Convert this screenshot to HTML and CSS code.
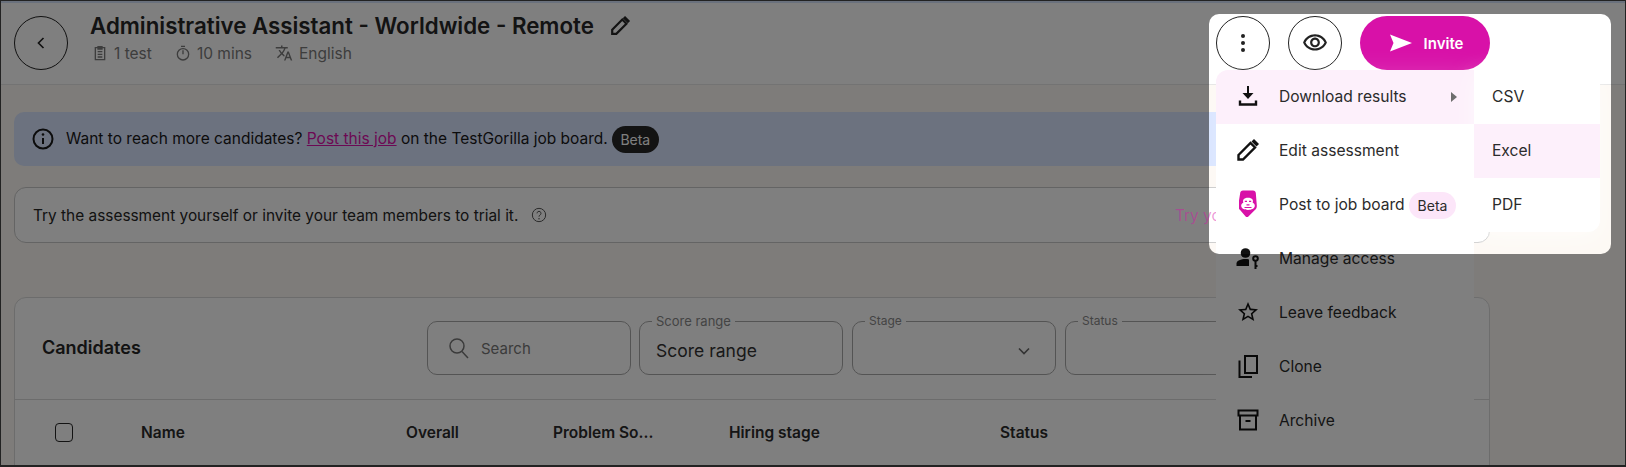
FILE: index.html
```html
<!DOCTYPE html>
<html lang="en">
<head>
<meta charset="utf-8">
<title>Administrative Assistant - Worldwide - Remote</title>
<link rel="stylesheet" href="styles.css">
</head>
<body>
<div class="frame">
  <div class="topband"></div>
  <header class="header">
    <button class="circle" aria-label="Back">
      <svg class="ico-20" viewBox="0 0 24 24"><path class="st2" d="M15 6l-6 6 6 6"/></svg>
    </button>
    <div class="heading">
      <h1 class="title">Administrative Assistant - Worldwide - Remote
        <svg class="ico-22" viewBox="0 0 24 24"><path class="st24" d="M3.500 16 14.500 5l4.500 4.500-11 11H3.500z"/><path d="M15 3.500 17.500 1 23 6.500 20.500 9z"/></svg>
      </h1>
      <div class="meta">
        <span class="meta-item">
          <svg class="ico-16" viewBox="0 0 24 24"><path class="st2" d="M5 4h14v18H5zM9 2.500h6V6H9zM8.500 10h7M8.500 14h7M8.500 18h7"/></svg>1 test</span>
        <span class="meta-item">
          <svg class="ico-16" viewBox="0 0 24 24"><path class="st2" d="M9 2h6M12 8v6"/><circle class="st2" cx="12" cy="14" r="8.500"/></svg>10 mins</span>
        <span class="meta-item">
          <svg class="ico-18" viewBox="0 0 24 24"><path d="M12.870 15.070l-2.540-2.510.030-.030c1.740-1.940 2.980-4.170 3.710-6.530H17V4h-7V2H8v2H1v1.990h11.170C11.500 7.920 10.440 9.750 9 11.350 8.070 10.320 7.300 9.190 6.690 8h-2c.730 1.630 1.730 3.170 2.980 4.560l-5.090 5.020L4 19l5-5 3.110 3.110.760-2.040zM18.500 10h-2L12 22h2l1.120-3h4.750L21 22h2l-4.500-12zm-2.620 7l1.620-4.330L19.120 17h-3.240z"/></svg>English</span>
      </div>
    </div>
    <div class="actions">
      <button class="circle" aria-label="More">
        <svg class="ico-24" viewBox="0 0 24 24"><circle cx="12" cy="5" r="2"/><circle cx="12" cy="12" r="2"/><circle cx="12" cy="19" r="2"/></svg>
      </button>
      <button class="circle" aria-label="Preview">
        <svg class="ico-26" viewBox="0 0 24 24"><path d="M12 6c3.790 0 7.170 2.130 8.820 5.500C19.170 14.870 15.790 17 12 17s-7.170-2.130-8.820-5.500C4.830 8.130 8.210 6 12 6m0-2C7 4 2.730 7.110 1 11.500 2.730 15.890 7 19 12 19s9.270-3.110 11-7.500C21.270 7.110 17 4 12 4zm0 5c1.380 0 2.500 1.120 2.500 2.500S13.380 14 12 14s-2.500-1.120-2.500-2.500S10.620 9 12 9m0-2c-2.480 0-4.500 2.020-4.500 4.500S9.520 16 12 16s4.500-2.020 4.500-4.500S14.480 7 12 7z"/></svg>
      </button>
      <button class="invite">
        <svg class="ico-24" viewBox="0 0 24 24"><path d="M1 20.500 23 12 1 3.500 4.500 12z"/></svg>Invite
      </button>
    </div>
  </header>

  <main class="main">
    <div class="banner">
      <svg class="ico-24" viewBox="0 0 24 24"><circle class="st2" cx="12" cy="12" r="9.500"/><path class="st2" d="M12 11v6"/><circle cx="12" cy="7.500" r="1.300"/></svg>
      <span class="banner-text">Want to reach more candidates? <a class="link" href="#">Post this job</a> on the TestGorilla job board.</span>
      <span class="beta-dark">Beta</span>
    </div>

    <div class="trial">
      <span>Try the assessment yourself or invite your team members to trial it.</span>
      <svg class="ico-16 help" viewBox="0 0 24 24"><circle class="st15" cx="12" cy="12" r="10"/><path class="st15" d="M9 9.500a3 3 0 1 1 4.500 2.600c-1 .6-1.500 1.100-1.500 2.400"/><circle cx="12" cy="17.500" r="1.100"/></svg>
      <a class="trial-link" href="#">Try yourself</a>
    </div>

    <section class="candidates">
      <div class="cand-head">
        <h2 class="cand-title">Candidates</h2>
        <div class="filters">
          <label class="search">
            <svg class="ico-24" viewBox="0 0 24 24"><circle class="st15" cx="10" cy="10" r="7"/><path class="st15" d="M15 15.500l6 6.500"/></svg>
            <span>Search</span>
          </label>
          <fieldset class="field field-score"><legend>Score range</legend><span>Score range</span></fieldset>
          <fieldset class="field field-next"><legend>Stage</legend>
            <svg class="ico-20 chev" viewBox="0 0 24 24"><path class="st2" d="M6 9l6 6 6-6"/></svg></fieldset>
          <fieldset class="field field-next"><legend>Status</legend></fieldset>
        </div>
      </div>
      <div class="thead">
        <span class="checkbox"></span>
        <span class="th th-name">Name</span>
        <span class="th th-overall">Overall</span>
        <span class="th th-problem">Problem So...</span>
        <span class="th th-stage">Hiring stage</span>
        <span class="th">Status</span>
      </div>
    </section>
  </main>

  <nav class="menu">
    <div class="row row-active">
      <svg class="ico-24" viewBox="0 0 24 24"><path class="st2" d="M12 2v11"/><path d="M6.500 9h11L12 15z"/><path class="st24" d="M4 16.500v4h16v-4"/></svg>
      <span>Download results</span>
      <span class="caret"></span>
      <div class="submenu">
        <div class="subrow">CSV</div>
        <div class="subrow subrow-active">Excel</div>
        <div class="subrow">PDF</div>
      </div>
    </div>
    <div class="row">
      <svg class="ico-24" viewBox="0 0 24 24"><path class="st24" d="M2.500 17 14.500 5l4.500 4.500-12 12H2.500z"/><path d="M15.500 3.500 18 1l5 5-2.500 2.500z"/></svg>
      <span>Edit assessment</span>
    </div>
    <div class="row">
      <svg class="logo" viewBox="0 0 18 28">
        <path class="gor" d="M4 .5h10c1.700 0 2.600.9 2.800 2.500l1 12.500c.1 1.900-.5 3.300-1.900 4.600l-6.500 6.400c-.9.700-1.900.7-2.800 0L1.100 20.100C-.3 18.800-.9 17.400-.8 15.500L1.200 3C1.400 1.400 2.300.5 4 .5z"/>
        <path class="gor-w" d="M4.500 9.500C6 7 12 7 13.500 9.500c.6 1 .6 2.200.1 3 1.400.8 2.400 2 2.200 3.500-.4 2.600-3.300 3.900-6.800 3.900s-6.400-1.300-6.800-3.900c-.2-1.500.8-2.700 2.200-3.500-.5-.8-.5-2 .1-3z"/>
        <path class="gor" d="M5.800 10.700h2.200v1.200H5.800zM10 10.700h2.200v1.200H10zM7.500 14.300h3v1.300h-3zM5.500 17h7v1h-7z"/>
      </svg>
      <span>Post to job board</span>
      <span class="beta-pink">Beta</span>
    </div>
    <div class="row">
      <svg class="ico-24" viewBox="0 0 24 24"><circle cx="9.500" cy="7" r="4.800"/><path d="M0.500 20v-2.500c0-3 4.500-4.500 9-4.500 1.300 0 2.500.1 3.500.4V20z"/><circle class="st2" cx="19.500" cy="12.500" r="2.300"/><path class="st2" d="M19.500 15v8M19.500 20h2"/></svg>
      <span>Manage access</span>
    </div>
    <div class="row">
      <svg class="ico-26" viewBox="0 0 24 24"><path d="M22 9.240l-7.190-.62L12 2 9.190 8.630 2 9.240l5.460 4.730L5.820 21 12 17.270 18.180 21l-1.630-7.030L22 9.240zM12 15.400l-3.760 2.270 1-4.280-3.320-2.880 4.380-.38L12 6.100l1.710 4.040 4.380.38-3.320 2.880 1 4.280L12 15.400z"/></svg>
      <span>Leave feedback</span>
    </div>
    <div class="row">
      <svg class="ico-24" viewBox="0 0 24 24"><path class="st2" d="M9 2h12v17H9zM3.500 6.500V23H16"/></svg>
      <span>Clone</span>
    </div>
    <div class="row">
      <svg class="ico-26" viewBox="0 0 24 24"><path class="st2" d="M2.500 2.500h19v5h-19zM4 7.500v14h16v-14M9.500 13h5"/></svg>
      <span>Archive</span>
    </div>
  </nav>

  <div class="spotlight"></div>
</div>
</body>
</html>
```
FILE: styles.css
```css
* { box-sizing: border-box; }
html, body { margin: 0; padding: 0; }
body { font-family: Inter, "Liberation Sans", sans-serif; color: #262626; background: #fdf9f4; }

svg { fill: currentColor; flex: none; display: block; }
.st2 { fill: none; stroke: currentColor; stroke-width: 2; }
.st24 { fill: none; stroke: currentColor; stroke-width: 2.400; }
.st15 { fill: none; stroke: currentColor; stroke-width: 1.500; }
.ico-16 { width: 16px; height: 16px; }
.ico-18 { width: 18px; height: 18px; }
.ico-20 { width: 20px; height: 20px; }
.ico-22 { width: 22px; height: 22px; }
.ico-24 { width: 24px; height: 24px; }
.ico-26 { width: 26px; height: 26px; }

.frame {
  position: relative;
  width: 1626px;
  height: 467px;
  overflow: hidden;
  border: 1px solid #222;
  border-bottom-width: 2px;
  background: #fdf9f4;
}
.topband { height: 2px; background: #d5e3fb; }

/* header */
.header {
  display: flex;
  align-items: flex-start;
  height: 82px;
  padding: 13px 135px 0 13px;
  background: #fff;
  border-bottom: 1px solid #e6e6e6;
}
.circle {
  width: 54px;
  height: 54px;
  border-radius: 50%;
  border: 1px solid #222;
  background: transparent;
  color: #222;
  padding: 0;
  display: flex;
  align-items: center;
  justify-content: center;
}
.heading { margin-left: 22px; margin-top: -4px; }
.title {
  margin: 0;
  display: flex;
  align-items: center;
  gap: 15px;
  height: 28px;
  font-size: 22.300px;
  line-height: 28px;
  font-weight: 600;
  color: #262626;
  white-space: nowrap;
}
.meta {
  display: flex;
  gap: 23px;
  margin-top: 2px;
  padding-left: 2px;
  height: 22px;
  align-items: center;
  font-size: 15.500px;
  color: #7a7a7a;
}
.meta-item { display: flex; align-items: center; gap: 6px; }
.actions { margin-left: auto; display: flex; gap: 18px; }
.invite {
  width: 130px;
  height: 54px;
  border: 0;
  border-radius: 27px;
  background: #d811a8;
  color: #fff;
  font: 600 15px Inter, "Liberation Sans", sans-serif;
  display: flex;
  align-items: center;
  justify-content: center;
  gap: 11px;
  padding: 0 0 0 2px;
}

/* main column */
.main { padding: 27px 135px 0 13px; }
.banner {
  display: flex;
  align-items: center;
  height: 54px;
  padding-left: 17px;
  border-radius: 10px;
  background: #d8e4ff;
  color: #181818;
  font-size: 15.500px;
}
.banner-text { margin-left: 11px; margin-bottom: 2px; white-space: nowrap; }
.link { color: #d811a8; text-decoration: underline; }
.beta-dark {
  margin-left: 4px;
  height: 27px;
  width: 47px;
  border-radius: 14px;
  background: #262626;
  color: #fff;
  font-size: 14px;
  display: flex;
  align-items: center;
  justify-content: center;
}
.trial {
  display: flex;
  align-items: center;
  height: 56px;
  margin-top: 21px;
  padding-left: 18px;
  border: 1px solid #c9c9c9;
  border-radius: 12px;
  background: #fff;
  font-size: 15.400px;
  color: #262626;
}
.help { margin-left: 13px; color: #555; }
.trial-link {
  position: relative;
  z-index: 30;
  display: block;
  width: 41px;
  margin-left: auto;
  margin-right: 273px;
  overflow: hidden;
  white-space: nowrap;
  color: rgba(216, 17, 168, .45);
  text-decoration: none;
}

/* candidates */
.candidates {
  height: 300px;
  margin-top: 54px;
  border: 1px solid #d9d9d9;
  border-radius: 12px;
  background: #fff;
}
.cand-head {
  display: flex;
  align-items: center;
  height: 102px;
  padding: 0 0 2px 27px;
  border-bottom: 1px solid #d9d9d9;
}
.cand-title { margin: 0; width: 385px; font-size: 18px; font-weight: 600; color: #262626; }
.filters { display: flex; gap: 8px; align-items: flex-start; margin-top: 1px; }
.search {
  display: flex;
  align-items: center;
  gap: 10px;
  width: 204px;
  height: 54px;
  padding-left: 19px;
  border: 1px solid #a8a8a8;
  border-radius: 10px;
  font-size: 15px;
  color: #777;
}
.field {
  width: 204px;
  height: 60px;
  margin: -6px 0 0;
  padding: 0 16px;
  border: 1px solid #a8a8a8;
  border-radius: 10px;
  font-size: 17.500px;
  color: #333;
  display: flex;
  align-items: center;
}
.field-next { margin-left: 1px; }
.field legend { margin-left: -4px; padding: 0 4px; font-size: 12px; line-height: 12px; color: #888; }
.field-score legend { font-size: 13px; }
.chev { margin-left: auto; color: #666; margin-right: 5px; }

.thead {
  display: flex;
  align-items: center;
  height: 64px;
  padding-left: 40px;
  font-size: 15.500px;
  font-weight: 600;
  color: #2a2a2a;
}
.checkbox {
  width: 18px;
  height: 19px;
  border: 1px solid #262626;
  border-radius: 4px;
  margin-right: 68px;
  background: #fff;
}
.th { white-space: nowrap; }
.th-name { width: 265px; }
.th-overall { width: 147px; }
.th-problem { width: 176px; }
.th-stage { width: 271px; }

/* dropdown */
.menu {
  position: absolute;
  left: 1215px;
  top: 69px;
  width: 258px;
  height: 378px;
  border-radius: 0 0 12px 12px;
  background: #fff;
  box-shadow: 0 8px 30px rgba(255, 255, 255, .25);
  font-size: 15.600px;
  color: #2b2b2b;
  z-index: 10;
}
.row {
  position: relative;
  display: flex;
  align-items: center;
  height: 54px;
  padding: 0 0 2px 20px;
}
.row > svg { width: 24px; height: 24px; color: #111; margin-right: 19px; }
.row > .logo { width: 18px; height: 28px; margin: 0 22px 0 3px; }
.row-active { background: #fdf0fb; border-radius: 12px 0 0 0; }
.caret {
  position: absolute;
  left: 235px;
  top: 22px;
  border-left: 6px solid #6b6b6b;
  border-top: 5px solid transparent;
  border-bottom: 5px solid transparent;
}
.beta-pink {
  position: absolute;
  left: 193px;
  top: 14px;
  width: 47px;
  height: 27px;
  border-radius: 14px;
  background: #fce6f9;
  display: flex;
  align-items: center;
  justify-content: center;
  font-size: 14px;
}
.gor { fill: #d811a8; }
.gor-w { fill: #fff; }
.submenu {
  position: absolute;
  left: 258px;
  top: 0;
  width: 126px;
  height: 162px;
  border-radius: 0 12px 12px 12px;
  background: #fff;
  box-shadow: 0 6px 24px rgba(255, 255, 255, .6);
  overflow: hidden;
}
.subrow { height: 54px; padding: 0 0 2px 18px; display: flex; align-items: center; }
.subrow-active { background: #fdf0fb; }

/* dim layer with a cut-out that leaves the actions visible */
.spotlight {
  position: absolute;
  left: 1208px;
  top: 13px;
  width: 402px;
  height: 240px;
  border-radius: 10px;
  box-shadow: 0 0 0 3000px rgba(0, 0, 0, .5);
  pointer-events: none;
  z-index: 20;
}
```
